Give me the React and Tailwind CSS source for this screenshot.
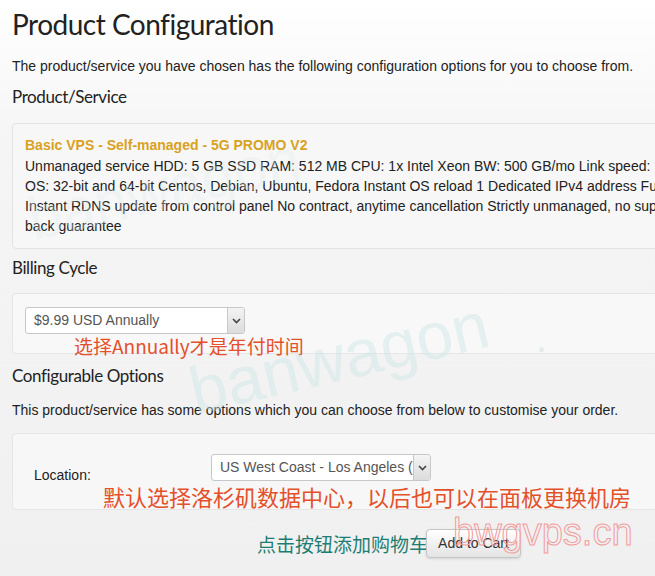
import React from "react";

const sans = { fontFamily: '"Liberation Sans", Arial, sans-serif' };

function FakeSelect({ value, className }) {
  return (
    <div
      className={`relative h-[27px] border border-[#c8c8c8] bg-white rounded-[3px] overflow-hidden ${className}`}
    >
      <div className="h-full flex items-center pl-[8px] pr-[22px] text-[14px] text-[#555] whitespace-nowrap overflow-hidden">
        {value}
      </div>
      {/* dropdown arrow box */}
      <div className="absolute right-0 top-0 h-full w-[17px] border-l border-[#c8c8c8] bg-gradient-to-b from-[#f4f4f4] to-[#dcdcdc] flex items-center justify-center">
        <svg width="9" height="6" viewBox="0 0 9 6">
          <path d="M1 1 L4.5 4.5 L8 1" fill="none" stroke="#444" strokeWidth="1.6" />
        </svg>
      </div>
    </div>
  );
}

export default function App() {
  const heading = "font-['Lato',sans-serif] text-[#222]";
  const red = "font-['Noto_Sans_CJK_SC',sans-serif] text-[#e4502a]";

  return (
    <div
      className="relative w-[655px] h-[576px] overflow-hidden bg-gradient-to-b from-white via-[#f5f5f5] via-25% to-[#f0f0f0] text-[#222]"
      style={sans}
    >
      <div className="pl-[12px]">
        <h1 className={`${heading} text-[28px] leading-[44px] pt-[2px] tracking-[-0.5px]`}>
          Product Configuration
        </h1>
        <p className="text-[14px] leading-[20px] mt-[10px]">
          The product/service you have chosen has the following configuration options for you to choose from.
        </p>
        <h2 className={`${heading} text-[17px] leading-[24px] mt-[9px] tracking-[-0.4px]`}>
          Product/Service
        </h2>

        {/* product panel */}
        <div className="mt-[14px] w-[900px] h-[126px] border border-[#e3e3e3] rounded-[4px] bg-[#f7f7f7] pl-[12px] pt-[11px] text-[14px] leading-[20px] whitespace-nowrap">
          <div className="font-bold text-[#d9a21e]">Basic VPS - Self-managed - 5G PROMO V2</div>
          <div className="mt-[1px]">Unmanaged service HDD: 5 GB SSD RAM: 512 MB CPU: 1x Intel Xeon BW: 500 GB/mo Link speed: 1 Gigabit</div>
          <div>OS: 32-bit and 64-bit Centos, Debian, Ubuntu, Fedora Instant OS reload 1 Dedicated IPv4 address Full root access</div>
          <div>Instant RDNS update from control panel No contract, anytime cancellation Strictly unmanaged, no support 30 day money</div>
          <div>back guarantee</div>
        </div>

        <h2 className={`${heading} text-[17px] leading-[24px] mt-[7px] tracking-[-0.4px]`}>
          Billing Cycle
        </h2>

        {/* billing panel */}
        <div className="relative mt-[13px] w-[900px] h-[61px] border border-[#e6e6e6] rounded-[4px] bg-[#f8f8f8] pl-[12px] pt-[13px]">
          <FakeSelect value="$9.99 USD Annually" className="w-[220px]" />
          <div className={`${red} absolute left-[61px] top-[39px] text-[19px] leading-[26px] whitespace-nowrap`}>
            选择Annually才是年付时间
          </div>
        </div>

        <h2 className={`${heading} text-[17px] leading-[24px] mt-[10px] tracking-[-0.4px]`}>
          Configurable Options
        </h2>
        <p className="text-[14px] leading-[20px] mt-[12px]">
          This product/service has some options which you can choose from below to customise your order.
        </p>

        {/* configurable options panel */}
        <div className="relative mt-[13px] w-[900px] h-[77px] border border-[#e6e6e6] rounded-[4px] bg-[#f7f7f7] pt-[20px]">
          <div className="flex items-start">
            <div className="w-[198px] pl-[21px] pt-[11px] text-[14px]">Location:</div>
            <FakeSelect value="US West Coast - Los Angeles (US)" className="w-[220px]" />
          </div>
          <div className={`${red} absolute left-[90px] top-[47px] text-[22px] leading-[30px] whitespace-nowrap`}>
            默认选择洛杉矶数据中心，以后也可以在面板更换机房
          </div>
        </div>

        {/* add to cart row */}
        <div className="flex items-center mt-[19px] pl-[245px]">
          <span className="font-['Noto_Sans_CJK_SC',sans-serif] text-[19px] leading-[28px] text-[#1d7d74] whitespace-nowrap">
            点击按钮添加购物车
          </span>
          <button className="ml-[-2px] h-[29px] w-[95px] border border-[#c5c5c5] rounded-[4px] bg-gradient-to-b from-white to-[#e4e4e4] text-[14px] text-[#333] shadow-sm">
            Add to Cart
          </button>
        </div>
      </div>

      {/* watermarks */}
      <div className="pointer-events-none absolute left-[198px] top-[358px] text-[66px] leading-none text-[#cde4e4]/45 rotate-[-13deg] origin-bottom-left select-none">
        banwagon
      </div>
      <div className="pointer-events-none absolute left-[536px] top-[318px] text-[40px] leading-none text-[#d3e2e2]/60 select-none">
        .
      </div>
      <div className="pointer-events-none absolute left-[36px] top-[190px] text-[60px] leading-none text-[#e2eaea]/30 rotate-[-13deg] origin-bottom-left select-none">
        banwagon
      </div>
      <div className="pointer-events-none absolute left-[453px] top-[510px] text-[38px] leading-[44px] text-transparent [-webkit-text-stroke:1px_#f19c9c] select-none">
        bwgvps.cn
      </div>
    </div>
  );
}
